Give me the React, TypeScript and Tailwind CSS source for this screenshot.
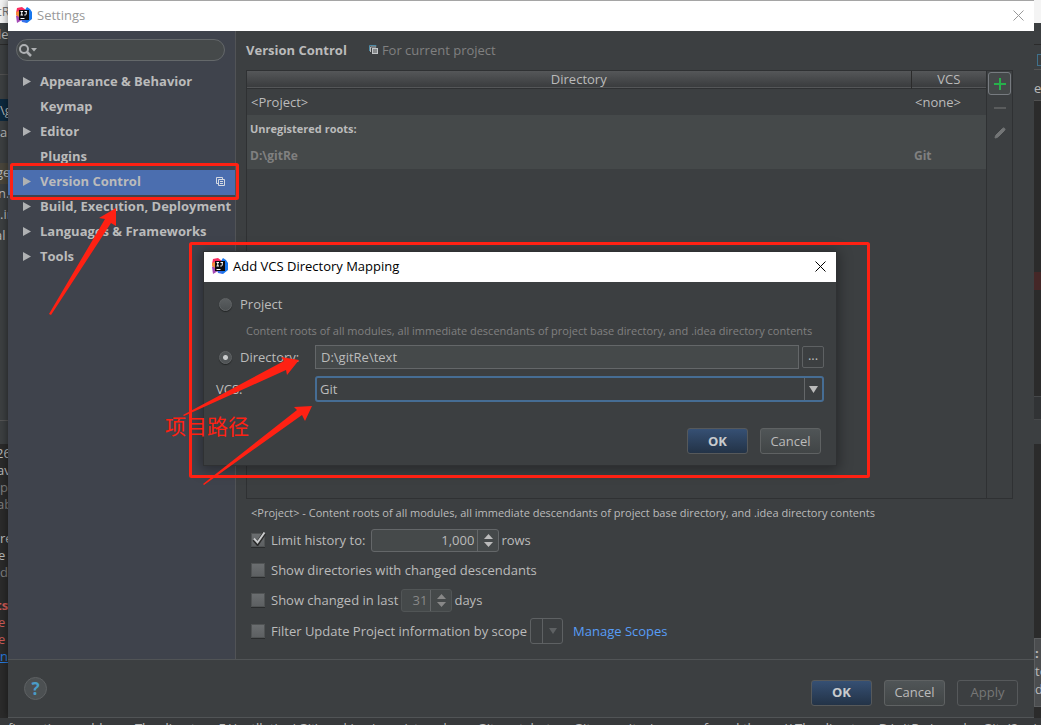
import React from 'react';
import { Pencil } from 'lucide-react';

const AppLogo: React.FC = () => (
  <svg className="w-4 h-4 shrink-0" viewBox="0 0 16 16" aria-hidden="true">
    <polygon points="1,1 6,0 10,3 4,9 0,6" fill="#fb2b5f" />
    <polygon points="0,9 4,5 6,13 1,16" fill="#a44bb5" />
    <polygon points="0,5 3,4 3,10 0,8" fill="#f58a3c" />
    <polygon points="9,3 11,0 14,2 16,5 16,12 11,16 7,14" fill="#1877ee" />
    <polygon points="5,12 9,12 11,16 6,15" fill="#3b6fe8" />
    <rect x="3" y="3" width="10" height="10" fill="#0b0b0d" />
    <path d="M4.500 4.500h2.500M5.750 4.500v3.500M4.500 8h2.500M8.500 4.500h2.500M10.250 4.500v2.500q0 1-1 1h-1M4.500 11.500h4" stroke="#fff" strokeWidth="1" fill="none" />
  </svg>
);

const CloseIcon: React.FC = () => (
  <svg className="w-[11px] h-[11px]" viewBox="0 0 11 11" aria-hidden="true">
    <path d="M0.500 0.500L10.500 10.500M10.500 0.500L0.500 10.500" stroke="currentColor" fill="none" />
  </svg>
);

const TreeArrow: React.FC = () => (
  <svg className="w-2 h-[9px]" viewBox="0 0 8 9" aria-hidden="true">
    <polygon points="0,0 8,4.5 0,9" fill="#afb1b3" />
  </svg>
);

const DownArrow: React.FC<{ className: string }> = ({ className }) => (
  <svg className={className} viewBox="0 0 8 6" preserveAspectRatio="none" aria-hidden="true">
    <polygon points="0,0 8,0 4,6" fill="currentColor" />
  </svg>
);

const categories = [
  { name: 'Appearance & Behavior', expandable: true },
  { name: 'Keymap', expandable: false },
  { name: 'Editor', expandable: true },
  { name: 'Plugins', expandable: false },
  { name: 'Version Control', expandable: true, selected: true },
  { name: 'Build, Execution, Deployment', expandable: true },
  { name: 'Languages & Frameworks', expandable: true },
  { name: 'Tools', expandable: true },
];

type ButtonKind = 'primary' | 'normal' | 'disabled';

const buttonStyles: Record<ButtonKind, string> = {
  primary: 'font-bold text-[#c8cbcd] bg-linear-to-b from-[#365074] to-[#233347] border-[#56595b]',
  normal: 'text-[#bbbbbb] bg-linear-to-b from-[#505557] to-[#414546] border-[#5f6263]',
  disabled: 'text-[#777777] border-[#56595b]',
};

const DialogButton: React.FC<{ label: string; kind: ButtonKind }> = ({ label, kind }) => (
  <button
    type="button"
    disabled={kind === 'disabled'}
    className={`w-[61px] h-[26px] rounded-[3px] border leading-none ${buttonStyles[kind]}`}
  >
    {label}
  </button>
);

const CheckRow: React.FC<{ id: string; label: string; checked?: boolean }> = ({ id, label, checked }) => (
  <div className="flex items-center">
    <span className="relative w-[14px] h-[14px] mr-[6px]">
      <input
        id={id}
        type="checkbox"
        defaultChecked={checked}
        className="block appearance-none w-[14px] h-[14px] border border-[#505354] bg-linear-to-b from-[#6b6e70] to-[#5d6062] shadow-[0_1px_0_#2a2c2d]"
      />
      {checked && (
        <svg className="absolute left-px -top-px w-[14px] h-[14px] pointer-events-none" viewBox="0 0 14 14" aria-hidden="true">
          <path d="M2 7.500L5.500 11.500L12.500 1" stroke="#2b2b2b" strokeWidth="4" fill="none" />
          <path d="M2 6.500L5.500 10.500L12.500 0.500" stroke="#c9cbcc" strokeWidth="2" fill="none" />
        </svg>
      )}
    </span>
    <label htmlFor={id}>{label}</label>
  </div>
);

interface SpinnerProps {
  label: string;
  value: string;
  width: string;
  disabled?: boolean;
}

const Spinner: React.FC<SpinnerProps> = ({ label, value, width, disabled }) => (
  <div
    className={`flex h-[23px] rounded-[3px] border bg-[#45494a] ${
      disabled ? 'border-[#515556] text-[#888888]' : 'border-[#646769] text-[#bbbbbb]'
    }`}
  >
    <input
      aria-label={label}
      defaultValue={value}
      disabled={disabled}
      className={`${width} pr-[3px] text-right border-r border-[#646769] outline-none`}
    />
    <div className="flex flex-col items-center justify-center gap-[3px] w-5">
      <DownArrow className="w-[9px] h-[5px] rotate-180" />
      <DownArrow className="w-[9px] h-[5px]" />
    </div>
  </div>
);

// Slivers of the IDE window that stay visible on both sides of the dialog
const LeftStrip: React.FC = () => (
  <div className="w-2 shrink-0 overflow-hidden whitespace-nowrap bg-[#3c3f41] text-[#bbbbbb] leading-[17px] flex flex-col">
    <div className="h-[23px] bg-[#f4f4f4] text-[#777777] leading-[23px] -indent-[3px]">tR</div>
    <div className="h-[22px] border-b border-[#2b2b2b] leading-[22px] -indent-[2px]">le</div>
    <div className="h-[30px] border-b border-[#515151]" />
    <div className="h-6" />
    <div className="h-[22px] bg-[#0d293e] leading-[22px]">\g</div>
    <div className="h-[42px] leading-[22px]">a</div>
    <div className="h-[21px] bg-[#4a463c] leading-[19px] -indent-[4px]">ge</div>
    <div className="h-[21px] leading-[19px] -indent-[2px]">n.</div>
    <div className="h-[21px] leading-[19px]">.in</div>
    <div className="h-[21px] leading-[19px] -indent-[5px]">al</div>
    <div className="h-[174px] border-b border-[#555555]" />
    <div className="h-6 border-b border-[#2b2b2b]" />
    <div className="flex-1 bg-[#2b2b2b]">
      <div className="-indent-[4px]">26</div>
      <div className="-indent-[3px]">av</div>
      <div className="text-[#808080]">p</div>
      <div className="text-[#808080] -indent-[3px]">ab</div>
      <div className="h-[17px]" />
      <div>re</div>
      <div className="-indent-[2px]">e</div>
      <div className="text-[#808080]">d</div>
      <div className="h-4" />
      <div className="font-bold text-[#cf5b56] -indent-[4px]">ts</div>
      <div className="text-[#cf5b56] -indent-[2px]">e</div>
      <div className="text-[#cf5b56] -indent-[2px]">e</div>
      <div className="text-[#287bde] underline">n</div>
    </div>
  </div>
);

const RightStrip: React.FC = () => (
  <div className="w-[7px] shrink-0 overflow-hidden whitespace-nowrap bg-[#2b2b2b] text-[#bbbbbb] flex flex-col">
    <div className="h-[23px] bg-[#f4f4f4]" />
    <div className="h-[22px] bg-[#3c3f41] border-b border-[#2b2b2b]" />
    <div className="h-[25px] bg-[#3c3f41] border-b border-[#555555] pt-[9px] pl-[3px]">
      <div className="w-3 h-3 border border-[#3f718c]" />
    </div>
    <div className="h-[31px] bg-[#3c3f41] border-b border-[#515151] leading-[36px]">e</div>
    <div className="h-[171px]" />
    <div className="h-[18px] bg-[#452727]" />
    <div className="h-[106px]" />
    <div className="h-6 bg-[#313335] border-y border-[#46484a]" />
    <div className="h-6 bg-[#3c3f41]" />
    <div className="h-[194px]" />
    <div className="h-[69px] bg-[#4b4d4f] border border-r-0 border-[#5c5e60] pt-[5px] leading-[18px]">
      <div className="font-bold">: c</div>
      <div>to</div>
      <div>d</div>
    </div>
  </div>
);

const Sidebar: React.FC = () => (
  <nav className="w-[228px] shrink-0 bg-[#3f434c] border-r border-[#515356] pt-2">
    <div className="flex items-center h-[22px] ml-2 mr-[10px] pl-[2px] rounded-full border border-[#64686a] bg-[#45494a]">
      <svg className="w-[18px] h-[13px] shrink-0" viewBox="0 0 18 13" aria-hidden="true">
        <circle cx="5" cy="5" r="4" stroke="#afb1b3" strokeWidth="2" fill="none" />
        <path d="M8 8L12 12" stroke="#afb1b3" strokeWidth="2.500" />
        <polygon points="12,4 18,4 15,7.5" fill="#afb1b3" />
      </svg>
      <input aria-label="Search settings" className="flex-1 min-w-0 px-1 outline-none text-[#bbbbbb]" />
    </div>
    <ul className="mt-[9px] font-bold">
      {categories.map((c) => (
        <li key={c.name}>
          <button
            type="button"
            className={`flex items-center w-full h-[25px] pl-[15px] pr-[10px] pb-[3px] text-left whitespace-nowrap ${
              c.selected ? 'bg-[#4b6eaf]' : ''
            }`}
          >
            <span className="w-[17px] shrink-0">{c.expandable && <TreeArrow />}</span>
            <span className="flex-1">{c.name}</span>
            {c.selected && (
              <svg className="w-[9px] h-[9px]" viewBox="0 0 9 9" aria-hidden="true">
                <path d="M2 6.500H0.500V0.500H6.500V2M2.500 2.500H8.500V8.500H2.500ZM4 4.500H7M4 6.500H7" stroke="#d4d9e2" fill="none" />
              </svg>
            )}
          </button>
        </li>
      ))}
    </ul>
  </nav>
);

const RootsTable: React.FC = () => (
  <div className="flex flex-1 mr-[21px] border border-[#2f3133]">
    <div className="flex-1">
      <table className="w-full table-fixed border-collapse text-left">
        <colgroup>
          <col />
          <col className="w-[75px]" />
        </colgroup>
        <thead>
          <tr className="h-[17px] bg-linear-to-b from-[#555759] to-[#3a3c3e] border-b border-[#2f3133] leading-4">
            <th className="p-0 font-normal text-center border-r border-[#2b2b2b]">Directory</th>
            <th className="p-0 font-normal text-center">VCS</th>
          </tr>
        </thead>
        <tbody>
          <tr className="h-[27px]">
            <td className="p-0 pl-1">&lt;Project&gt;</td>
            <td className="p-0 pl-1">&lt;none&gt;</td>
          </tr>
          <tr className="h-[27px] bg-[#45494a] text-[11px] font-bold">
            <td className="p-0 pl-[3px]" colSpan={2}>Unregistered roots:</td>
          </tr>
          <tr className="h-[27px] bg-[#45494a] text-xs font-bold text-[#808080]">
            <td className="p-0 pl-[3px]">D:\gitRe</td>
            <td className="p-0 pl-[3px]">Git</td>
          </tr>
        </tbody>
      </table>
    </div>
    <div className="flex flex-col items-center w-[26px] pt-px border-l border-[#2f3133]">
      <button type="button" aria-label="Add" className="flex items-center justify-center w-[23px] h-[23px] rounded-[3px] border border-[#777b80] bg-[#45494a]">
        <svg className="w-3 h-3" viewBox="0 0 12 12" aria-hidden="true">
          <path d="M6 0V12M0 6H12" stroke="#27b04b" strokeWidth="2" />
        </svg>
      </button>
      <button type="button" aria-label="Remove" className="flex items-center justify-center w-[23px] h-[25px]">
        <svg className="w-3 h-[2px]" viewBox="0 0 12 2" aria-hidden="true">
          <rect width="12" height="2" fill="#5a5c5d" />
        </svg>
      </button>
      <button type="button" aria-label="Edit" className="flex items-center justify-center w-[23px] h-[25px] text-[#737576]">
        <Pencil className="w-3 h-3" fill="currentColor" />
      </button>
    </div>
  </div>
);

const MappingDialog: React.FC = () => (
  <section
    role="dialog"
    aria-label="Add VCS Directory Mapping"
    className="absolute left-[204px] top-[252px] w-[632px] bg-[#3c3f41] shadow-[0_2px_12px_3px_rgba(0,0,0,0.35)] outline outline-[#2f3133]"
  >
    <header className="flex items-center h-[30px] pl-2 pr-[10px] pb-[2px] bg-white text-black">
      <AppLogo />
      <h2 className="flex-1 ml-[5px]">Add VCS Directory Mapping</h2>
      <button type="button" aria-label="Close mapping">
        <CloseIcon />
      </button>
    </header>
    <form className="pl-3 pr-3 pt-[9px] pb-[11px]">
      <div className="flex items-center h-[26px] pl-[3px]">
        <input id="map-project" type="radio" name="target" className="appearance-none w-[13px] h-[13px] mr-2 rounded-full border border-[#606365] bg-linear-to-b from-[#5b5f61] to-[#4b4f51] shadow-[0_1px_1px_#232525]" />
        <label htmlFor="map-project">Project</label>
      </div>
      <p className="h-[27px] pl-[30px] text-[11px] leading-[28px] text-[#808080] whitespace-nowrap">
        Content roots of all modules, all immediate descendants of project base directory, and .idea directory contents
      </p>
      <div className="flex items-center h-[26px]">
        <div className="flex items-center w-[99px] pl-[3px] shrink-0">
          <input
            id="map-directory"
            type="radio"
            name="target"
            defaultChecked
            className="appearance-none w-[13px] h-[13px] mr-2 rounded-full border border-[#606365] bg-[radial-gradient(circle,#c9cbcc_2px,#505456_3px)] shadow-[0_1px_1px_#232525]"
          />
          <label htmlFor="map-directory">Directory:</label>
        </div>
        <input
          aria-label="Directory path"
          defaultValue="D:\gitRe\text"
          className="flex-1 min-w-0 h-6 pl-[5px] border border-[#646769] bg-[#45494a] text-[#bbbbbb] outline-none"
        />
        <button type="button" aria-label="Browse" className="flex items-center justify-center w-[22px] h-[22px] ml-[3px] pb-1 rounded-[2px] border border-[#5e6163]">
          <span className="leading-none">...</span>
        </button>
      </div>
      <div className="flex items-center mt-[6px] h-[26px]">
        <label htmlFor="map-vcs" className="w-[99px] shrink-0">VCS:</label>
        <div className="relative flex-1 h-[26px]">
          <select
            id="map-vcs"
            defaultValue="Git"
            className="block appearance-none w-full h-[26px] pl-[3px] rounded-[3px] border-2 border-[#466d94] bg-[#3c3f41] text-[#bbbbbb] outline-none"
          >
            <option>Git</option>
          </select>
          <span className="absolute right-[2px] inset-y-[2px] w-[18px] flex items-center justify-center border-l border-[#646769] pointer-events-none">
            <DownArrow className="w-[9px] h-[7px]" />
          </span>
        </div>
      </div>
      <div className="flex justify-end gap-3 mt-[26px] pr-[3px]">
        <DialogButton label="OK" kind="primary" />
        <DialogButton label="Cancel" kind="normal" />
      </div>
    </form>
  </section>
);

const Annotations: React.FC = () => (
  <>
    <span className="absolute left-[165px] top-[412px] text-[21px] leading-[26px] text-[#ff2113] whitespace-nowrap font-['Noto_Sans_CJK_SC',sans-serif]">
      项目路径
    </span>
    <svg className="absolute left-0 top-0 w-[1041px] h-[725px] pointer-events-none" viewBox="0 0 1041 725" aria-hidden="true">
      <g fill="none" stroke="#ff2113" strokeWidth="3">
        <rect x="11.500" y="164.500" width="226" height="34" rx="1" />
        <rect x="190.500" y="243.500" width="678" height="233" rx="1" />
      </g>
      <g fill="#ff2113">
        <polygon points="49,314 105,219 99,218 116,208 116,226 111,223 51,315" />
        <polygon points="183,415 284,361 281,357 299,360 287,375 286,370 184,416" />
        <polygon points="203,484 297,410 294,407 312,406 305,421 302,415 204,485" />
      </g>
    </svg>
  </>
);

const App: React.FC = () => {
  return (
    <div className="relative flex flex-col h-screen overflow-hidden bg-[#3c3f41] text-[13px] leading-[18px] text-[#bbbbbb] font-['Open_Sans','Noto_Sans_CJK_SC',sans-serif]">
      <div className="flex flex-1 min-h-0">
        <LeftStrip />
        <main className="flex flex-col flex-1 min-w-0 bg-[#3c3f41] border-t border-b border-t-[#a5a5a5] border-b-[#515456] shadow-[0_0_8px_rgba(0,0,0,0.5)]">
          <header className="flex items-center h-[30px] pl-2 pr-[10px] pb-[2px] bg-white text-[#999999]">
            <AppLogo />
            <h1 className="flex-1 ml-[5px]">Settings</h1>
            <button type="button" aria-label="Close settings">
              <CloseIcon />
            </button>
          </header>

          <div className="flex flex-1 min-h-0">
            <Sidebar />
            <div className="flex flex-col flex-1 min-w-0 pl-[10px]">
              <div className="flex items-center h-[39px] pb-[2px]">
                <h2 className="font-bold">Version Control</h2>
                <svg className="w-[9px] h-[9px] ml-[22px] mr-1" viewBox="0 0 9 9" aria-hidden="true">
                  <path d="M0.500 6V0.500H7V1.500" stroke="#4f8ba6" fill="none" />
                  <path d="M1.500 7V2H7" stroke="#b9bcbe" fill="none" />
                  <rect x="3" y="3" width="6" height="6" fill="#c3c6c8" />
                  <path d="M4 5H8M4 7H8" stroke="#4a4d4f" strokeWidth="1" />
                </svg>
                <span className="text-[#808080]">For current project</span>
              </div>
              <RootsTable />
              <div className="pl-[5px] pb-3">
                <p className="mt-[5px] mb-[3px] text-[11px] leading-[18px]">
                  &lt;Project&gt; - Content roots of all modules, all immediate descendants of project base directory, and .idea directory contents
                </p>
                <div className="flex items-center h-[30px]">
                  <CheckRow id="limit" label="Limit history to:" checked />
                  <div className="ml-[6px] mr-[2px]">
                    <Spinner label="Rows of history" value="1,000" width="w-[106px]" />
                  </div>
                  rows
                </div>
                <div className="flex items-center h-[30px]">
                  <CheckRow id="descendants" label="Show directories with changed descendants" />
                </div>
                <div className="flex items-center h-[30px]">
                  <CheckRow id="last-days" label="Show changed in last" />
                  <div className="ml-[3px] mr-[2px]">
                    <Spinner label="Number of days" value="31" width="w-[29px]" disabled />
                  </div>
                  days
                </div>
                <div className="flex items-center h-8">
                  <CheckRow id="scope-filter" label="Filter Update Project information by scope" />
                  <div className="relative ml-[3px]">
                    <select aria-label="Scope" disabled className="block appearance-none w-[33px] h-[26px] rounded-[3px] border border-[#5e6163]" />
                    <span className="absolute right-px inset-y-px w-5 flex items-center justify-center border-l border-[#5e6163] text-[#5e6163] pointer-events-none">
                      <DownArrow className="w-2 h-[6px]" />
                    </span>
                  </div>
                  <a href="#scopes" className="ml-[10px] text-[#589df6]">Manage Scopes</a>
                </div>
              </div>
            </div>
          </div>

          <footer className="flex items-center h-[58px] pl-4 pr-4 pt-2 border-t border-[#515456]">
            <button type="button" aria-label="Help" className="flex items-center justify-center w-[23px] h-[23px] -mt-2 rounded-full border border-[#5e6163] bg-[#4c5052] text-[17px] font-bold text-[#4a9cc7]">
              ?
            </button>
            <div className="flex gap-3 ml-auto">
              <DialogButton label="OK" kind="primary" />
              <DialogButton label="Cancel" kind="normal" />
              <DialogButton label="Apply" kind="disabled" />
            </div>
          </footer>
        </main>
        <RightStrip />
      </div>
      <div className="h-[7px] shrink-0 overflow-hidden whitespace-nowrap pt-px bg-[#37393b]">
        nfiguration problems: The directory E:\instllation\Git\working is registered as a Git root, but no Git repositories were found there. // The directory D:\gitRe is under Git. (2 minutes ago)
      </div>

      <MappingDialog />
      <Annotations />
    </div>
  );
};

export default App;
